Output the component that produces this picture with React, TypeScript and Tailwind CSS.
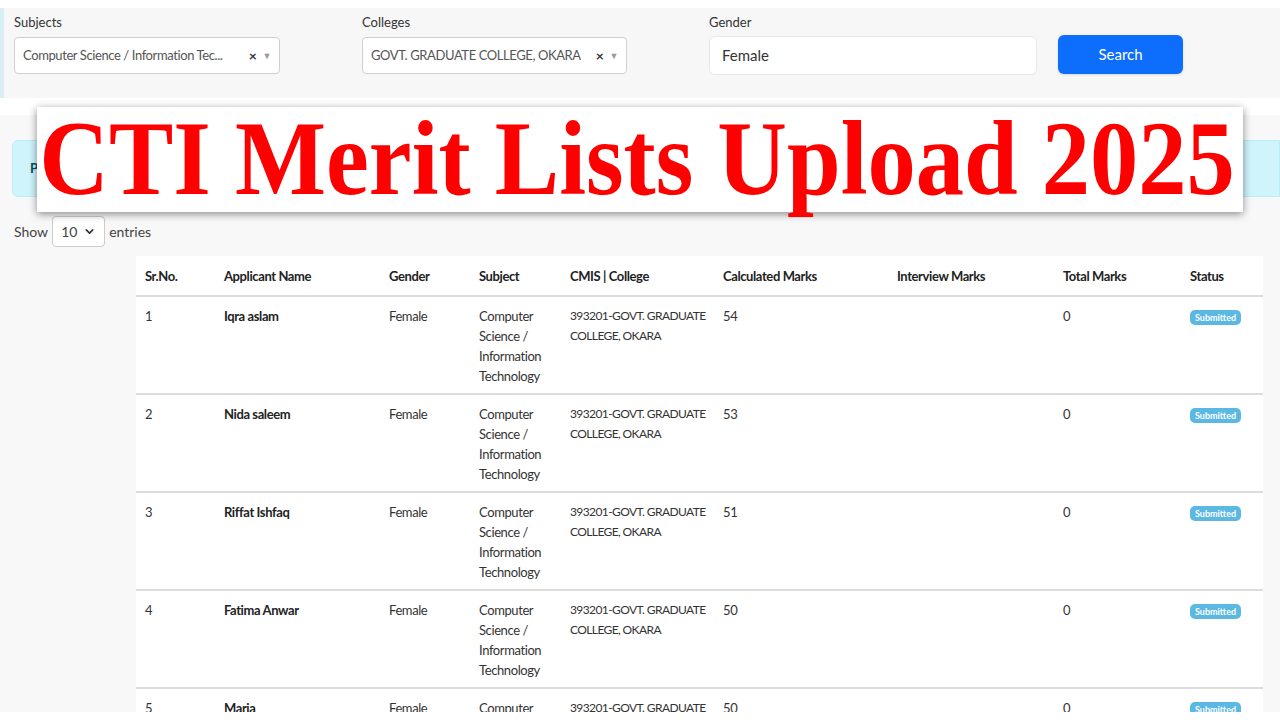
import { ChevronDown } from 'lucide-react'

const font = { fontFamily: 'Lato, "Open Sans", sans-serif' }

const rows = [
  { sr: 1, name: 'Iqra aslam', marks: 54 },
  { sr: 2, name: 'Nida saleem', marks: 53 },
  { sr: 3, name: 'Riffat Ishfaq', marks: 51 },
  { sr: 4, name: 'Fatima Anwar', marks: 50 },
  { sr: 5, name: 'Maria', marks: 50 },
]

const columns = [
  { label: 'Sr.No.', w: 'w-[79px]' },
  { label: 'Applicant Name', w: 'w-[165px]' },
  { label: 'Gender', w: 'w-[90px]' },
  { label: 'Subject', w: 'w-[91px]' },
  { label: 'CMIS | College', w: 'w-[153px]' },
  { label: 'Calculated Marks', w: 'w-[174px]' },
  { label: 'Interview Marks', w: 'w-[166px]' },
  { label: 'Total Marks', w: 'w-[127px]' },
  { label: 'Status', w: 'w-[82px]' },
]

function Select2({ value, width }: { value: string; width: string }) {
  return (
    <div
      className={`${width} flex h-[37px] items-center justify-between rounded border border-[#cfcfcf] bg-white pl-[8px] pr-[8px] text-[13px] tracking-[-0.4px] text-[#555]`}
    >
      <span className="truncate">{value}</span>
      <span className="flex items-center gap-[6px] pl-2">
        <span className="text-[14px] font-bold text-[#333]">×</span>
        <span className="text-[9px] text-[#999]">▼</span>
      </span>
    </div>
  )
}

export default function App() {
  return (
    <div className="h-[720px] overflow-hidden bg-white" style={font}>
      <div className="h-[712px] overflow-hidden bg-[#f8f8f8]">
        <div className="h-[8px] bg-white" />

        {/* filters */}
        <div className="flex h-[90px] items-start border-l-[4px] border-[#d9eff8] bg-[#f7f7f7] pl-[10px] pt-[6px]">
          <div className="w-[348px]">
            <div className="mb-[6px] h-[17px] text-[13px] leading-[17px] text-[#333]">Subjects</div>
            <Select2 value="Computer Science / Information Tec..." width="w-[266px]" />
          </div>
          <div className="w-[347px]">
            <div className="mb-[6px] h-[17px] text-[13px] leading-[17px] text-[#333]">Colleges</div>
            <Select2 value="GOVT. GRADUATE COLLEGE, OKARA" width="w-[265px]" />
          </div>
          <div className="w-[349px]">
            <div className="mb-[5px] h-[17px] text-[13px] leading-[17px] text-[#333]">Gender</div>
            <div className="flex h-[39px] w-[328px] items-center rounded-md border border-[#e8e8e8] bg-white pl-[12px] text-[15px] text-[#333]">
              Female
            </div>
          </div>
          <div className="pt-[21px]">
            <button className="h-[39px] w-[125px] rounded-md bg-[#0d6efd] text-[15px] text-white shadow-sm">
              Search
            </button>
          </div>
        </div>

        <div className="h-[17px] bg-white" />

        {/* content */}
        <div className="pt-[25px]">
          <div className="ml-[12px] flex h-[57px] items-center rounded-l-md border border-[#b6effb] bg-[#cff4fc] pl-[17px] text-[13px] font-bold text-[#055160]">
            P
          </div>

          <div className="ml-[14px] mt-[19px] flex items-center text-[14px] text-[#444]">
            <span>Show</span>
            <div className="mx-[4px] flex h-[31px] w-[53px] items-center justify-between rounded border border-[#ccc] bg-white px-[8px]">
              <span>10</span>
              <ChevronDown className="h-[13px] w-[13px] text-[#333]" strokeWidth={3} />
            </div>
            <span>entries</span>
          </div>

          <table className="ml-[136px] mt-[9px] w-[1127px] table-fixed border-collapse bg-white text-left text-[13px] tracking-[-0.4px] text-[#333]">
            <thead>
              <tr className="border-b-2 border-[#dcdcdc]">
                {columns.map((c) => (
                  <th key={c.label} className={`${c.w} px-[9px] pb-[9px] pt-[10px] font-bold leading-[20px] text-[#222]`}>
                    {c.label}
                  </th>
                ))}
              </tr>
            </thead>
            <tbody>
              {rows.map((r) => (
                <tr key={r.sr} className="border-b-2 border-[#dcdcdc] align-top">
                  <td className="px-[9px] pb-[7px] pt-[9px] leading-[20px]">{r.sr}</td>
                  <td className="px-[9px] pb-[7px] pt-[9px] font-bold leading-[20px] text-[#222]">{r.name}</td>
                  <td className="px-[9px] pb-[7px] pt-[9px] leading-[20px]">Female</td>
                  <td className="px-[9px] pb-[7px] pt-[9px] leading-[20px]">
                    Computer Science / Information Technology
                  </td>
                  <td className="whitespace-nowrap px-[9px] pb-[7px] pt-[9px] text-[12px] leading-[20px] tracking-[-0.6px]">
                    393201-GOVT. GRADUATE
                    <br />
                    COLLEGE, OKARA
                  </td>
                  <td className="px-[9px] pb-[7px] pt-[9px] leading-[20px]">{r.marks}</td>
                  <td className="px-[9px] pb-[7px] pt-[9px] leading-[20px]"></td>
                  <td className="px-[9px] pb-[7px] pt-[9px] leading-[20px]">0</td>
                  <td className="px-[9px] pb-[7px] pt-[9px] leading-[20px]">
                    <span className="inline-block rounded-[5px] bg-[#5bb8e3] px-[5px] text-[9px] font-bold leading-[15px] tracking-normal text-white">
                      Submitted
                    </span>
                  </td>
                </tr>
              ))}
            </tbody>
          </table>
        </div>
      </div>

      {/* title banner over the page */}
      <div className="absolute left-[37px] top-[107px] flex h-[105px] w-[1206px] items-center justify-center bg-white pr-[6px] shadow-[0_2px_8px_rgba(0,0,0,0.45)]">
        <span
          className="inline-block scale-y-[1.1] whitespace-nowrap text-[96.5px] font-bold leading-none text-[#ff0000]"
          style={{ fontFamily: '"Liberation Serif", "Times New Roman", serif' }}
        >
          CTI Merit Lists Upload 2025
        </span>
      </div>
    </div>
  )
}
